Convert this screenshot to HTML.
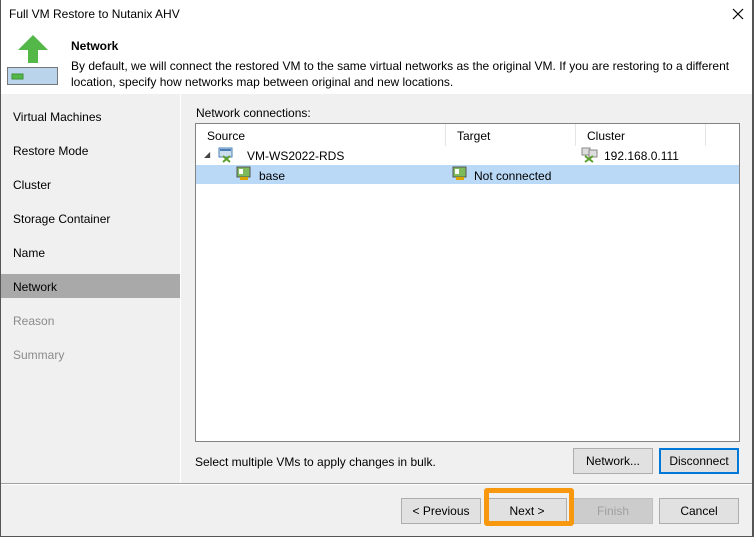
<!DOCTYPE html>
<html><head><style>
*{margin:0;padding:0;box-sizing:border-box}
body{width:754px;height:537px;background:#f0f0f0;font-family:"Liberation Sans",sans-serif;font-size:12px;color:#000;position:relative;overflow:hidden}
.a{position:absolute}
.btn{position:absolute;height:26px;background:#e1e1e1;border:1px solid #adadad;text-align:center;line-height:24px;font-size:12px}
.nav{position:absolute;left:13px;font-size:12px}
</style></head><body>
<div class="a" style="left:0;top:0;width:754px;height:94px;background:#fff"></div>
<div class="a" style="left:0;top:0;width:1px;height:537px;background:#555"></div>
<div class="a" style="right:0;top:0;width:2px;height:537px;background:#555"></div>
<div class="a" style="left:0;bottom:0;width:754px;height:1px;background:#555"></div>
<div class="a" style="left:9px;top:7px;font-size:12px">Full VM Restore to Nutanix AHV</div>
<svg class="a" style="left:732px;top:8px" width="12" height="12"><path d="M1 1 L11 11 M11 1 L1 11" stroke="#000" stroke-width="1.2"/></svg>
<svg class="a" style="left:7px;top:34px" width="52" height="52">
<polygon points="26,1 11,16 21,16 21,29 31,29 31,16 41,16" fill="#53b848"/>
<rect x="0.5" y="33.5" width="50" height="17" fill="#bad4ec" stroke="#777"/>
<rect x="5" y="40" width="11" height="5" fill="#53b848" stroke="#3c8f35" stroke-width="1"/>
</svg>
<div class="a" style="left:71px;top:39px;font-weight:bold">Network</div>
<div class="a" style="left:71px;top:58px;line-height:16px;width:680px">By default, we will connect the restored VM to the same virtual networks as the original VM. If you are restoring to a different location, specify how networks map between original and new locations.</div>
<div class="a" style="left:180px;top:94px;width:1px;height:390px;background:#fff"></div>
<div class="nav" style="top:110px">Virtual Machines</div>
<div class="nav" style="top:144px">Restore Mode</div>
<div class="nav" style="top:178px">Cluster</div>
<div class="nav" style="top:212px">Storage Container</div>
<div class="nav" style="top:246px">Name</div>
<div class="a" style="left:1px;top:274px;width:179px;height:24px;background:#a9a9a9"></div>
<div class="nav" style="top:280px">Network</div>
<div class="nav" style="top:314px;color:#8a8a8a">Reason</div>
<div class="nav" style="top:348px;color:#8a8a8a">Summary</div>
<div class="a" style="left:196px;top:106px">Network connections:</div>
<div class="a" style="left:195px;top:123px;width:545px;height:319px;background:#fff;border:1px solid #828282"></div>
<div class="a" style="left:445px;top:124px;width:1px;height:22px;background:#e5e5e5"></div>
<div class="a" style="left:575px;top:124px;width:1px;height:22px;background:#e5e5e5"></div>
<div class="a" style="left:705px;top:124px;width:1px;height:22px;background:#e5e5e5"></div>
<div class="a" style="left:207px;top:129px">Source</div>
<div class="a" style="left:457px;top:129px">Target</div>
<div class="a" style="left:587px;top:129px">Cluster</div>
<div class="a" style="left:204px;top:150px;font-size:8px;color:#444">◢</div>
<svg class="a" style="left:218px;top:147px" width="18" height="16"><rect x="1" y="1" width="13" height="9" fill="#cde" stroke="#4a7fb5"/><rect x="2" y="2" width="11" height="2" fill="#4a7fb5"/><path d="M5 9 L12 15 M12 9 L5 15" stroke="#5aa02c" stroke-width="2"/></svg>
<div class="a" style="left:247px;top:149px">VM-WS2022-RDS</div>
<svg class="a" style="left:581px;top:147px" width="18" height="16"><rect x="1" y="1" width="8" height="7" fill="#ddd" stroke="#888"/><rect x="8" y="3" width="8" height="7" fill="#ddd" stroke="#888"/><path d="M4 9 L12 15 M12 9 L4 15" stroke="#5aa02c" stroke-width="2"/></svg>
<div class="a" style="left:604px;top:149px">192.168.0.111</div>
<div class="a" style="left:196px;top:165px;width:543px;height:19px;background:#b9d9f7"></div>
<svg class="a" style="left:236px;top:166px" width="16" height="16"><rect x="1" y="1" width="13" height="10" fill="#7cba5c" stroke="#555"/><rect x="3" y="3" width="4" height="5" fill="#fff"/><rect x="4" y="11" width="8" height="3" fill="#d9a400"/></svg>
<div class="a" style="left:259px;top:169px">base</div>
<svg class="a" style="left:452px;top:166px" width="16" height="16"><rect x="1" y="1" width="13" height="10" fill="#7cba5c" stroke="#555"/><rect x="3" y="3" width="4" height="5" fill="#fff"/><rect x="4" y="11" width="8" height="3" fill="#d9a400"/></svg>
<div class="a" style="left:474px;top:169px">Not connected</div>
<div class="a" style="left:195px;top:455px">Select multiple VMs to apply changes in bulk.</div>
<div class="btn" style="left:573px;top:448px;width:80px">Network...</div>
<div class="btn" style="left:659px;top:448px;width:80px;border:2px solid #0078d7;line-height:22px">Disconnect</div>
<div class="a" style="left:1px;top:483px;width:751px;height:1px;background:#a0a0a0"></div>
<div class="a" style="left:1px;top:484px;width:751px;height:1px;background:#fff"></div>
<div class="btn" style="left:401px;top:498px;width:80px">&lt; Previous</div>
<div class="btn" style="left:487px;top:498px;width:80px">Next &gt;</div>
<div class="btn" style="left:573px;top:498px;width:80px;background:#ccc;border-color:#bfbfbf;color:#a0a0a0">Finish</div>
<div class="btn" style="left:659px;top:498px;width:80px">Cancel</div>
<div class="a" style="left:484px;top:488px;width:90px;height:38px;border:5px solid #f7980e;border-radius:3px"></div>
</body></html>
